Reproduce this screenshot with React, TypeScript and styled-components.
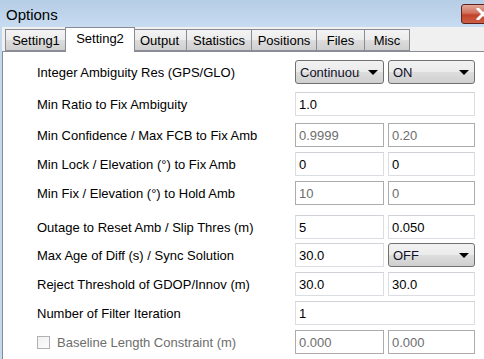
import { createGlobalStyle, styled } from "styled-components";

const GlobalStyle = createGlobalStyle`
  html, body {
    margin: 0;
    padding: 0;
    background: #c4d8ee;
  }
  * {
    box-sizing: border-box;
  }
`;

type Field =
  | { kind: "combo"; value: string }
  | { kind: "text"; value: string; disabled?: boolean };

type RowData = {
  label: string;
  gap: number;
  fields: Field[];
  check?: boolean;
  disabled?: boolean;
};

const rows: RowData[] = [
  {
    label: "Integer Ambiguity Res (GPS/GLO)",
    gap: 8,
    fields: [
      { kind: "combo", value: "Continuous" },
      { kind: "combo", value: "ON" },
    ],
  },
  { label: "Min Ratio to Fix Ambiguity", gap: 8, fields: [{ kind: "text", value: "1.0" }] },
  {
    label: "Min Confidence / Max FCB to Fix Amb",
    gap: 7,
    fields: [
      { kind: "text", value: "0.9999", disabled: true },
      { kind: "text", value: "0.20", disabled: true },
    ],
  },
  {
    label: "Min Lock / Elevation (°) to Fix Amb",
    gap: 5,
    fields: [
      { kind: "text", value: "0" },
      { kind: "text", value: "0" },
    ],
  },
  {
    label: "Min Fix / Elevation (°) to Hold Amb",
    gap: 5,
    fields: [
      { kind: "text", value: "10", disabled: true },
      { kind: "text", value: "0", disabled: true },
    ],
  },
  {
    label: "Outage to Reset Amb / Slip Thres (m)",
    gap: 10,
    fields: [
      { kind: "text", value: "5" },
      { kind: "text", value: "0.050" },
    ],
  },
  {
    label: "Max Age of Diff (s) / Sync Solution",
    gap: 4,
    fields: [
      { kind: "text", value: "30.0" },
      { kind: "combo", value: "OFF" },
    ],
  },
  {
    label: "Reject Threshold of GDOP/Innov (m)",
    gap: 5,
    fields: [
      { kind: "text", value: "30.0" },
      { kind: "text", value: "30.0" },
    ],
  },
  { label: "Number of Filter Iteration", gap: 5, fields: [{ kind: "text", value: "1" }] },
  {
    label: "Baseline Length Constraint (m)",
    gap: 5,
    check: true,
    disabled: true,
    fields: [
      { kind: "text", value: "0.000", disabled: true },
      { kind: "text", value: "0.000", disabled: true },
    ],
  },
];

const tabs = ["Setting1", "Setting2", "Output", "Statistics", "Positions", "Files", "Misc"];
const tabWidths = [62, 66, 54, 65, 65, 48, 45];

const Options = () => {
  return (
    <Window>
      <GlobalStyle />
      <TitleBar>
        <Title>Options</Title>
        <CloseButton>
          <svg width="14" height="12" viewBox="0 0 14 12">
            <path d="M2 1 L12 11 M12 1 L2 11" stroke="#fff" strokeWidth="3" strokeLinecap="square" />
          </svg>
        </CloseButton>
      </TitleBar>
      <Client>
        <TabStrip>
          {tabs.map((t, i) => (
            <Tab key={t} $active={i === 1} $w={tabWidths[i]}>
              {t}
            </Tab>
          ))}
        </TabStrip>
        <Page>
          {rows.map((r) => (
            <Row key={r.label} $gap={r.gap}>
              <Label $disabled={r.disabled}>
                {r.check && <CheckBox />}
                {r.label}
              </Label>
              <Fields $single={r.fields.length === 1}>
                {r.fields.map((f, i) =>
                  f.kind === "combo" ? (
                    <Combo key={i}>
                      <ComboText>{f.value}</ComboText>
                      <Arrow />
                    </Combo>
                  ) : (
                    <TextBox key={i} $disabled={f.disabled}>
                      {f.value}
                    </TextBox>
                  )
                )}
              </Fields>
            </Row>
          ))}
        </Page>
      </Client>
    </Window>
  );
};

export default Options;

const Window = styled.div`
  width: 484px;
  height: 359px;
  overflow: hidden;
  display: flex;
  flex-direction: column;
  font-family: "Liberation Sans", Arial, sans-serif;
  font-size: 13px;
  color: #000;
`;

const TitleBar = styled.div`
  height: 27px;
  flex-shrink: 0;
  display: flex;
  align-items: flex-start;
  padding-left: 6px;
  background: linear-gradient(to bottom, #b6cde6 0%, #c0d5ec 60%, #c8dcf1 100%);
  overflow: hidden;
`;

const Title = styled.div`
  font-size: 15px;
  line-height: 15px;
  margin-top: 7px;
  color: #000;
`;

const CloseButton = styled.div`
  margin-left: auto;
  margin-right: -22px;
  margin-top: 4px;
  width: 45px;
  height: 20px;
  flex-shrink: 0;
  border: 1px solid #5b2222;
  border-radius: 3px;
  background: linear-gradient(to bottom, #e4a89a 0%, #d0705c 45%, #c2422a 55%, #cc5f45 100%);
  display: flex;
  align-items: center;
  padding-left: 14px;
`;

const Client = styled.div`
  flex: 1;
  display: flex;
  flex-direction: column;
  margin-left: 2px;
  background: #f0f0f0;
`;

const TabStrip = styled.div`
  height: 24px;
  display: flex;
  align-items: flex-end;
  padding-left: 3px;
  position: relative;
  z-index: 1;
`;

const Tab = styled.div<{ $active?: boolean; $w: number }>`
  width: ${(p) => p.$w + (p.$active ? 4 : 0)}px;
  height: ${(p) => (p.$active ? 25 : 22)}px;
  margin: ${(p) => (p.$active ? "0 -2px -1px -2px" : "0")};
  border: 1px solid #898c95;
  border-bottom: ${(p) => (p.$active ? "none" : "1px solid #898c95")};
  border-left-width: ${(p) => (p.$active ? 1 : 0)}px;
  background: ${(p) =>
    p.$active ? "#ffffff" : "linear-gradient(to bottom, #f3f3f3 0%, #ebebeb 50%, #dddddd 51%, #cfcfcf 100%)"};
  display: flex;
  justify-content: center;
  align-items: ${(p) => (p.$active ? "flex-start" : "center")};
  padding-top: ${(p) => (p.$active ? 3 : 1)}px;
  position: relative;
  z-index: ${(p) => (p.$active ? 2 : 1)};
  white-space: nowrap;
  &:first-child {
    border-left-width: 1px;
  }
`;

const Page = styled.div`
  flex: 1;
  background: #ffffff;
  border-top: 1px solid #898c95;
  border-left: 1px solid #898c95;
  padding-left: 34px;
  display: flex;
  flex-direction: column;
`;

const Row = styled.div<{ $gap: number }>`
  height: 24px;
  margin-top: ${(p) => p.$gap}px;
  display: grid;
  grid-template-columns: 258px 180px;
  align-items: center;
`;

const Label = styled.div<{ $disabled?: boolean }>`
  display: flex;
  align-items: center;
  color: ${(p) => (p.$disabled ? "#6d6d6d" : "#000")};
  white-space: nowrap;
`;

const CheckBox = styled.span`
  width: 13px;
  height: 13px;
  border: 1px solid #b1b1b1;
  background: linear-gradient(to bottom right, #f0f0f0, #fbfbfb);
  margin-right: 7px;
  flex-shrink: 0;
`;

const Fields = styled.div<{ $single?: boolean }>`
  display: grid;
  grid-template-columns: ${(p) => (p.$single ? "180px" : "89px 87px")};
  column-gap: 4px;
  height: 24px;
`;

const TextBox = styled.div<{ $disabled?: boolean }>`
  height: 24px;
  border: 1px solid ${(p) => (p.$disabled ? "#acacac" : "#dadde2")};
  border-top-color: ${(p) => (p.$disabled ? "#acacac" : "#cfd2d6")};
  background: #fff;
  color: ${(p) => (p.$disabled ? "#6d6d6d" : "#000")};
  padding-left: 3px;
  display: flex;
  align-items: center;
`;

const Combo = styled.div`
  height: 24px;
  border: 1px solid #707070;
  border-radius: 3px;
  background: linear-gradient(to bottom, #f2f2f2 0%, #ebebeb 50%, #dddddd 51%, #cfcfcf 100%);
  display: flex;
  align-items: center;
  padding-left: 4px;
  overflow: hidden;
`;

const ComboText = styled.span`
  flex: 1;
  min-width: 0;
  overflow: hidden;
  white-space: nowrap;
  color: #10102a;
`;

const Arrow = styled.span`
  width: 0;
  height: 0;
  border-left: 5px solid transparent;
  border-right: 5px solid transparent;
  border-top: 5px solid #000;
  margin: 0 5px 0 8px;
  flex-shrink: 0;
`;
